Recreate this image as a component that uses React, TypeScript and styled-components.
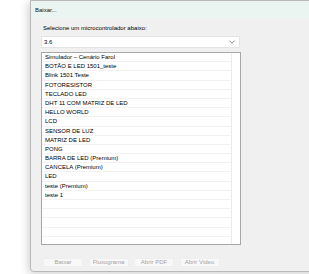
import styled, { createGlobalStyle } from "styled-components";

const Global = createGlobalStyle`
    html, body {
        margin: 0;
        padding: 0;
        background: #ffffff;
        overflow: hidden;
    }
    body {
        font-family: "Liberation Sans", Arial, sans-serif;
        font-size: 6px;
        color: #000000;
    }
`;

const Page = styled.div`
    width: 309px;
    height: 274px;
    overflow: hidden;
`;

const Window = styled.div`
    margin-left: 30px;
    width: 300px;
    height: 270px;
    border: 1px solid #b9b9b9;
    border-radius: 0 0 0 4px;
    background: #f0f0f0;
    box-shadow: -2px 2px 9px rgba(0, 0, 0, 0.18);
    display: flex;
    flex-direction: column;
`;

const TitleBar = styled.div`
    height: 17px;
    display: flex;
    align-items: center;
    padding-left: 4px;
    background: #eaf5f1;
    color: #111;
`;

const Body = styled.div`
    padding-left: 10px;
    display: flex;
    flex-direction: column;
`;

const Label = styled.div`
    margin-top: 6px;
    height: 8px;
    line-height: 8px;
    padding-left: 2px;
`;

const Select = styled.div`
    margin-top: 4px;
    width: 199px;
    height: 12px;
    background: #ffffff;
    border: 1px solid #e4e4e4;
    box-sizing: border-box;
    display: flex;
    align-items: center;
    justify-content: space-between;
    padding: 0 4px 0 2px;
`;

const List = styled.div`
    margin-top: 4px;
    width: 200px;
    height: 193px;
    box-sizing: border-box;
    background: #ffffff;
    border: 1px solid #a8a8a8;
    overflow: hidden;
`;

const Row = styled.div`
    width: 190px;
    height: 9.2px;
    line-height: 9.2px;
    box-sizing: border-box;
    padding-left: 3px;
    border-bottom: 1px solid #f2f2f2;
    border-right: 1px solid #ebebeb;
    white-space: nowrap;
`;

const Buttons = styled.div`
    margin-top: 13px;
    padding-left: 2px;
    display: flex;
    gap: 5.5px;
`;

const Btn = styled.button`
    width: 40px;
    height: 9px;
    padding: 0;
    border: 1px solid #eeeeee;
    border-radius: 1px;
    background: #f8f8f8;
    color: #a3a3a3;
    font-family: inherit;
    font-size: 6px;
    line-height: 7px;
`;

const items = [
    "Simulador – Cenário Farol",
    "BOTÃO E LED 1501_teste",
    "Blink 1501 Teste",
    "FOTORESISTOR",
    "TECLADO LED",
    "DHT 11 COM MATRIZ DE LED",
    "HELLO WORLD",
    "LCD",
    "SENSOR DE LUZ",
    "MATRIZ DE LED",
    "PONG",
    "BARRA DE LED (Premium)",
    "CANCELA (Premium)",
    "LED",
    "teste (Premium)",
    "teste 1",
    "",
    "",
    "",
    "",
    "",
];

function App() {
    return (
        <Page>
            <Global />
            <Window>
                <TitleBar>Baixar...</TitleBar>
                <Body>
                    <Label>Selecione um microcontrolador abaixo:</Label>
                    <Select>
                        <span>3.6</span>
                        <svg width="6" height="4" viewBox="0 0 6 4">
                            <path d="M0.5 0.8 L3 3.2 L5.5 0.8" fill="none" stroke="#666" strokeWidth="0.8" />
                        </svg>
                    </Select>
                    <List>
                        {items.map((t, i) => (
                            <Row key={i}>{t}</Row>
                        ))}
                    </List>
                    <Buttons>
                        <Btn disabled>Baixar</Btn>
                        <Btn disabled>Fluxograma</Btn>
                        <Btn disabled>Abrir PDF</Btn>
                        <Btn disabled>Abrir Video</Btn>
                    </Buttons>
                </Body>
            </Window>
        </Page>
    );
}

export default App;
